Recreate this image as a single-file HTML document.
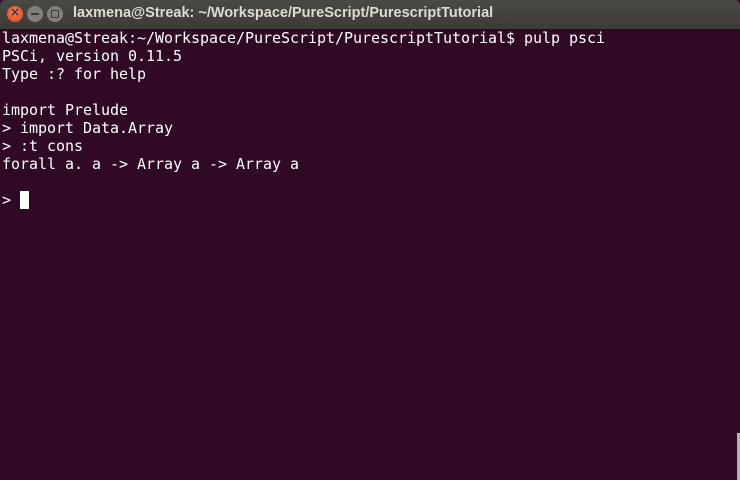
<!DOCTYPE html>
<html><head><style>
body{margin:0;width:740px;height:480px;overflow:hidden;background:#300a24;}
.tb{position:absolute;left:0;top:0;width:740px;height:29px;background:linear-gradient(#4a4944,#3c3b37);border-radius:5px 5px 0 0;}
.title{position:absolute;left:73px;top:5px;font:bold 14.5px "Liberation Sans",sans-serif;color:#dfdbd2;}
.btn{position:absolute;top:6px;width:16px;height:16px;border-radius:50%;}
.term{position:absolute;left:2px;top:29px;font:15px/18px "DejaVu Sans Mono","Liberation Mono",monospace;letter-spacing:-0.03px;color:#fff;white-space:pre;}
.cur{display:inline-block;width:9px;height:18px;background:#fff;vertical-align:top;}
</style></head><body>
<div class="tb">
<div class="btn" style="left:7px;background:radial-gradient(circle at 50% 40%,#f37f57,#d9491c);"><span style="position:absolute;left:3px;top:-1px;font:bold 12px 'DejaVu Sans',sans-serif;color:#3c3b37">×</span></div>
<div class="btn" style="left:27px;background:#817f78;"><span style="position:absolute;left:4px;top:7px;width:8px;height:2px;background:#3c3b37"></span></div>
<div class="btn" style="left:47px;background:#817f78;"><span style="position:absolute;left:4px;top:4px;width:6px;height:6px;border:1px solid #3c3b37"></span></div>
<div class="title">laxmena@Streak: ~/Workspace/PureScript/PurescriptTutorial</div>
</div>
<div class="term">laxmena@Streak:~/Workspace/PureScript/PurescriptTutorial$ pulp psci
PSCi, version 0.11.5
Type :? for help

import Prelude
&gt; import Data.Array
&gt; :t cons
forall a. a -&gt; Array a -&gt; Array a

&gt; <span class="cur"></span></div>
<div style="position:absolute;left:737px;top:433px;width:3px;height:47px;background:#b8aeb4"></div>
</body></html>
